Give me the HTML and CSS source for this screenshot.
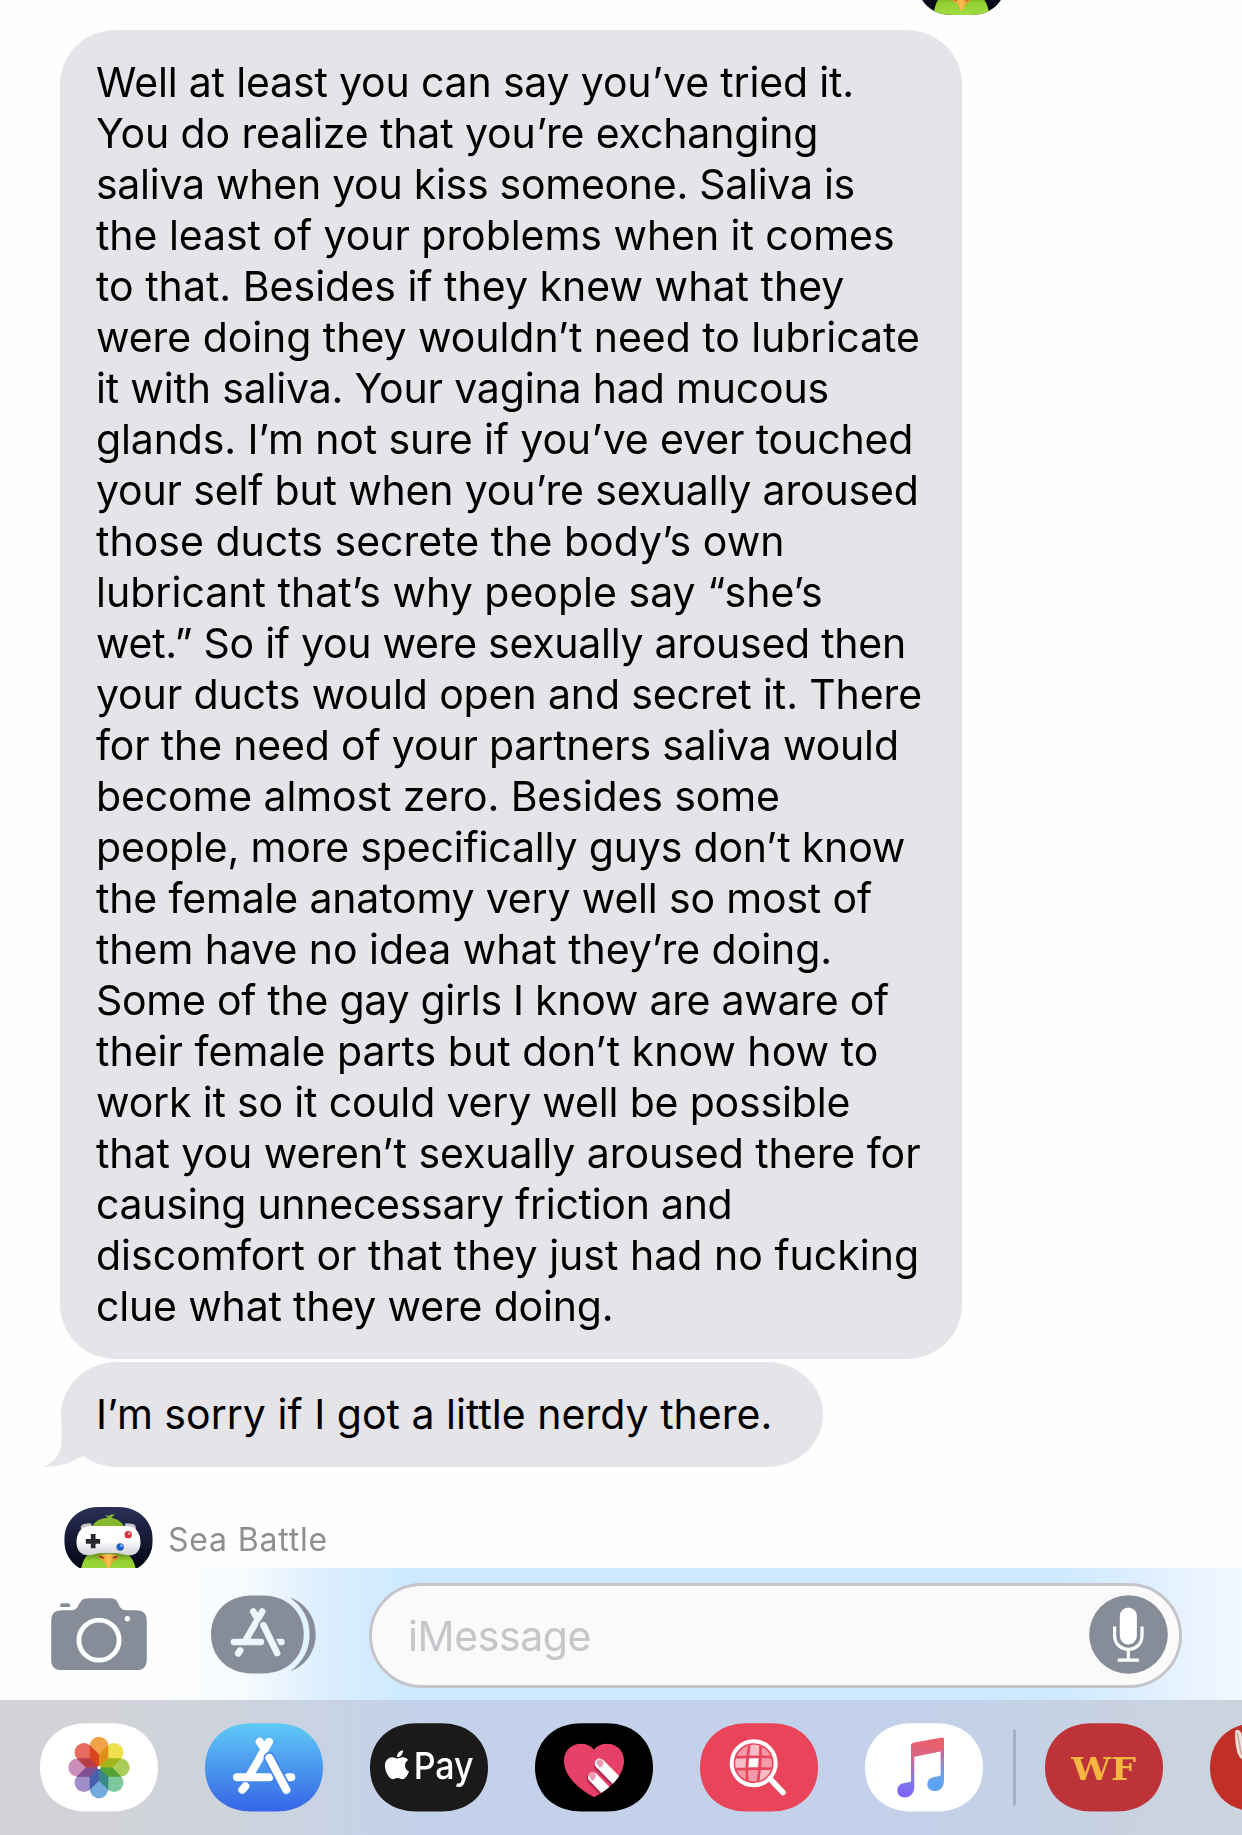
FILE: index.html
```html
<!DOCTYPE html>
<html lang="en">
<head>
<meta charset="utf-8">
<title>Messages</title>
<link rel="stylesheet" href="styles.css">
</head>
<body>
<svg class="defs" width="0" height="0" aria-hidden="true">
  <defs>
    <linearGradient id="navy" x1="0" y1="0" x2="0" y2="1"><stop offset="0" stop-color="#2a3059"/><stop offset="1" stop-color="#02030d"/></linearGradient>
    <linearGradient id="pad" x1="0" y1="0" x2="0" y2="1"><stop offset=".5" stop-color="#fff"/><stop offset="1" stop-color="#d0d0d6"/></linearGradient>
    <linearGradient id="beak"><stop offset="0" stop-color="#dc8020"/><stop offset=".5" stop-color="#ffc052"/><stop offset="1" stop-color="#c96f1c"/></linearGradient>
    <linearGradient id="feather" x1="0" y1="0" x2="0" y2="1"><stop offset="0" stop-color="#4e7d13"/><stop offset=".4" stop-color="#91cf2e"/><stop offset="1" stop-color="#a2dc44"/></linearGradient>
    <linearGradient id="store" x1="0" y1="0" x2="0" y2="1"><stop offset="0" stop-color="#60caf6"/><stop offset="1" stop-color="#3564e6"/></linearGradient>
    <linearGradient id="noteTop" gradientUnits="userSpaceOnUse" x1="170" y1="60" x2="150" y2="215"><stop offset="0" stop-color="#e8606e"/><stop offset=".3" stop-color="#d5678f"/><stop offset=".75" stop-color="#7d7de0"/><stop offset="1" stop-color="#8062fb"/></linearGradient>
    <linearGradient id="noteRight" gradientUnits="userSpaceOnUse" x1="0" y1="90" x2="0" y2="190"><stop offset="0" stop-color="#c4699f"/><stop offset=".6" stop-color="#6c9ee8"/><stop offset="1" stop-color="#5da5f4"/></linearGradient>
    <path id="pill" d="M140 0H214C300 0 354 56 354 133S300 265 214 265H140C54 265 0 210 0 133S54 0 140 0Z"/>
    <clipPath id="avatarClip"><path d="M206 50H262C326 50 367 92 367 149S326 248 262 248H206C142 248 101 206 101 149S142 50 206 50Z"/></clipPath>
    <clipPath id="heartClip"><path d="M177 222C150 208 87 168 87 112C87 62 150 46 177 80C204 46 267 62 267 112C267 168 204 208 177 222Z"/></clipPath>
    <clipPath id="lensClip"><circle cx="161" cy="120" r="55"/></clipPath>
    <path id="petal" d="M-28-64A28 28 0 0 1 28-64V-28L0 0L-28-28Z"/>
    <symbol id="bird" viewBox="101 50 266 198">
      <g clip-path="url(#avatarClip)">
        <rect x="101" y="50" width="266" height="198" fill="url(#navy)"/>
        <path d="M150 248C154 215 164 190 190 184H277C303 190 314 220 318 248Z" fill="url(#feather)"/>
        <path d="M184 110C195 88 217 83 232 83L223 73L234 77L240 73L253 72L243 82C262 86 275 96 282 110Z" fill="#86b82e"/>
        <path d="M151 108Q155 99 181 99L184 107L151 118ZM284 99Q309 99 315 106L317 118L284 108Z" fill="#c6c6cf"/>
        <path d="M180 107H288C319 107 331 133 330 158C329 184 315 196 294 195C276 194 270 189 256 189H212C196 189 191 195 174 195C151 195 139 180 138 158C137 133 149 107 180 107Z" fill="url(#pad)"/>
        <path d="M181 131H195V146H209V160H195V174H181V160H166V146H181Z" fill="#29292d"/>
        <circle cx="293" cy="133" r="11" fill="#d92f3e"/><circle cx="296" cy="130" r="4" fill="#f7a0a8"/>
        <circle cx="269" cy="170" r="11" fill="#1c5ecf"/><circle cx="273" cy="166" r="4" fill="#8abaff"/>
        <path d="M200 197Q233 185 268 197Q260 209 246 216L234 238L222 215Q207 208 200 197Z" fill="url(#beak)"/>
        <path d="M207 198L220 203M260 198L247 203" stroke="#6c3f16" stroke-width="5"/>
      </g>
    </symbol>
  </defs>
</svg>

<main class="screen">
  <section class="thread">
    <div class="previous"><svg class="avatar"><use href="#bird"/></svg></div>
    <div class="bubble">
      <span class="k3">Well at least you can say you’ve tried it.</span>
      <span class="k2">You do realize that you’re exchanging</span>
      <span class="k4">saliva when you kiss someone. Saliva is</span>
      <span class="k1">the least of your problems when it comes</span>
      <span class="k0">to that. Besides if they knew what they</span>
      <span class="k1">were doing they wouldn’t need to lubricate</span>
      <span class="k3">it with saliva. Your vagina had mucous</span>
      <span class="k2">glands. I’m not sure if you’ve ever touched</span>
      <span class="k3">your self but when you’re sexually aroused</span>
      <span class="k0">those ducts secrete the body’s own</span>
      <span class="k0">lubricant that’s why people say “she’s</span>
      <span class="k4">wet.” So if you were sexually aroused then</span>
      <span class="k2">your ducts would open and secret it. There</span>
      <span class="k3">for the need of your partners saliva would</span>
      <span class="k2">become almost zero. Besides some</span>
      <span class="k3">people, more specifically guys don’t know</span>
      <span class="k3">the female anatomy very well so most of</span>
      <span class="k1">them have no idea what they’re doing.</span>
      <span class="k4">Some of the gay girls I know are aware of</span>
      <span class="k0">their female parts but don’t know how to</span>
      <span class="k3">work it so it could very well be possible</span>
      <span class="k1">that you weren’t sexually aroused there for</span>
      <span class="k4">causing unnecessary friction and</span>
      <span class="k0">discomfort or that they just had no fucking</span>
      <span class="k3">clue what they were doing.</span>
    </div>
    <div class="bubble last">
      <span class="k0">I’m sorry if I got a little nerdy there.</span>
      <svg class="tail" viewBox="128 200 122 181"><path d="M183 200V306C181 345 158 370 128 380C172 383 218 367 246 348L250 200Z" fill="#e5e4e9"/></svg>
    </div>
    <div class="game"><svg class="avatar"><use href="#bird"/></svg><span>Sea Battle</span></div>
  </section>

  <section class="compose">
    <svg class="camera" viewBox="153 113 288 217">
      <path d="M180 140V134Q180 129 186 129H204Q210 129 210 134V140Z" fill="#868c98"/>
      <path d="M184 150H216C240 150 232 114 264 114H332C362 114 350 150 380 150H410Q441 150 441 181V298Q441 330 410 330H184Q153 330 153 298V181Q153 150 184 150Z" fill="#868c98"/>
      <circle cx="297" cy="240" r="60.5" fill="none" stroke="#fff" stroke-width="14.5"/><circle cx="382.500" cy="175.500" r="8" fill="#fff"/>
    </svg>
    <svg class="apps" viewBox="633 104 316 236">
      <path d="M755 105H790C862 105 912 155 912 222S862 339 790 339H755C683 339 633 289 633 222S683 105 755 105Z" fill="#868c98"/>
      <path d="M870 111C916 126 948 169 948 222S916 318 870 333C909 307 930 267 930 222S909 137 870 111Z" fill="#868c98"/>
      <g stroke="#edf5fe" stroke-width="20" stroke-linecap="round" fill="none">
        <path d="M787 153L736 242M760 153L768 166M702 244.500H783M832 244.500H845M721 270L715 279"/>
        <path d="M791 194L832 278" stroke="#868c98" stroke-width="32"/><path d="M791 194L832 278"/>
      </g>
    </svg>
    <div class="field"><span>iMessage</span>
      <svg class="mic" viewBox="808 104 236 236"><circle cx="926" cy="222" r="117.500" fill="#868c98"/><rect x="900" y="141" width="51" height="111" rx="25.500" fill="#fff"/><path d="M884.500 198V224C884.500 280 966.500 280 966.500 224V198M925.500 266V298M894 298.500H957" fill="none" stroke="#fff" stroke-width="9.500"/></svg>
    </div>
  </section>

  <nav class="drawer">
    <svg class="app" viewBox="0 0 354 266"><use href="#pill" fill="#fff"/>
      <g class="petals" transform="translate(177 133)">
        <use href="#petal" fill="#f1a34a"/><use href="#petal" fill="#efe14d" transform="rotate(45)"/><use href="#petal" fill="#aacd57" transform="rotate(90)"/><use href="#petal" fill="#7dc89b" transform="rotate(135)"/><use href="#petal" fill="#73acdc" transform="rotate(180)"/><use href="#petal" fill="#a18dc8" transform="rotate(225)"/><use href="#petal" fill="#cb8dba" transform="rotate(270)"/><use href="#petal" fill="#e66c60" transform="rotate(315)"/>
      </g><circle cx="177" cy="133" r="5" fill="#fff"/></svg>
    <svg class="app" viewBox="0 0 354 266"><use href="#pill" fill="url(#store)"/>
      <g stroke="#fff" stroke-width="24" stroke-linecap="round" fill="none"><path d="M192 56L135 155M164 56L174 71M96 162H193M250 162H259M121 189L112 200"/><path d="M193 104L244 200" stroke="#4785ec" stroke-width="35"/><path d="M193 104L244 200"/></g></svg>
    <svg class="app" viewBox="0 0 354 266"><use href="#pill" fill="#1b1a18"/>
      <path transform="translate(44 75) scale(.192 .194)" fill="#fff" d="M318.700 268.700c-.2-36.700 16.400-64.400 50-84.800-18.800-26.900-47.200-41.700-84.700-44.600-35.500-2.800-74.300 20.700-88.500 20.700-15 0-49.400-19.700-76.400-19.700C63.300 141.200 4 184.800 4 273.500q0 39.300 14.400 81.200c12.800 36.700 59 126.700 107.200 125.200 25.200-.6 43-17.900 75.800-17.900 31.800 0 48.300 17.900 76.400 17.900 48.600-.7 90.400-82.500 102.600-119.300-65.200-30.700-61.700-90-61.700-91.900zm-56.600-164.200c27.300-32.400 24.800-61.900 24-72.500-24.100 1.400-52 16.400-67.900 34.900-17.500 19.800-27.800 44.300-25.600 71.900 26.100 2 49.900-11.400 69.500-34.300z"/>
      <text class="pay" x="131" y="168" textLength="180" lengthAdjust="spacingAndGlyphs">Pay</text></svg>
    <svg class="app" viewBox="0 0 354 266"><use href="#pill" fill="#000"/>
      <g clip-path="url(#heartClip)"><rect x="80" y="55" width="200" height="170" fill="#e84169"/>
        <g stroke-linecap="round"><path d="M172 166L232 229M195 128L266 199" stroke="#b02950" stroke-width="36"/><path d="M174 162L240 231M194 121L280 208" stroke="#fff" stroke-width="30"/></g>
        <path d="M161 158Q160 147 175 146Q185 152 182 162L176 171H169ZM184 119Q184 108 198 108Q208 115 205 124L199 132H192Z" fill="#ed9bb3"/></g></svg>
    <svg class="app" viewBox="0 0 354 266"><use href="#pill" fill="#e9445a"/>
      <g clip-path="url(#lensClip)"><rect x="100" y="60" width="120" height="120" fill="#f39aaa"/><path d="M143 60L179 62L175 105H139ZM101 106H139L136 136H101ZM179 139H220V180H175Z" fill="#f7bdc7"/><path d="M147 106H175L172 134H144Z" fill="#fff"/>
        <path d="M100 103Q160 99 221 102M100 138Q160 135 221 137M149 60Q137 119 142 181M181 60Q184 119 173 181" fill="none" stroke="#e9445a" stroke-width="8"/></g>
      <circle cx="161" cy="120" r="66" fill="none" stroke="#fff" stroke-width="12"/><path d="M213 170L249 208" stroke="#fff" stroke-width="17" stroke-linecap="round"/><path d="M205 162L216 173" stroke="#fff" stroke-width="9"/></svg>
    <svg class="app" viewBox="0 0 354 266"><use href="#pill" fill="#fff"/>
      <path d="M138 67Q138 61 144 59L231 43Q237 42 237 48V96L227 85L148 101V190C148 233 97 230 97 203C97 173 132 181 138 174Z" fill="url(#noteTop)"/>
      <path d="M227 85L237 80V171C237 215 187 210 187 184C187 156 220 163 227 156Z" fill="url(#noteRight)"/></svg>
    <i class="divider"></i>
    <svg class="app" viewBox="0 0 354 266"><use href="#pill" fill="#be3337"/><text class="wf" x="79" y="171" textLength="194" lengthAdjust="spacingAndGlyphs">WF</text></svg>
    <svg class="app" viewBox="0 0 354 266"><use href="#pill" fill="#c13027"/><path d="M76 23Q84 15 94 28L109 112Q90 112 82 88Q73 55 76 23Z" fill="#eee0dc"/><path d="M82 28L94 94" stroke="#cda69d" stroke-width="5"/></svg>
  </nav>
</main>
</body>
</html>
```
FILE: styles.css
```css
* { box-sizing: border-box; }
body { margin: 0; background: #fefefe; font-family: Inter, "Liberation Sans", sans-serif; }
.defs { position: absolute; }
.screen { display: flex; flex-direction: column; width: 1242px; height: 1835px; overflow: hidden; }
.thread { display: flex; flex-direction: column; align-items: flex-start; height: 1568px; overflow: hidden; }
.thread > * { flex: none; }
.previous { display: flex; align-items: flex-end; width: 100%; height: 15px; margin-bottom: 15px; padding-left: 917px; overflow: hidden; }
.avatar { display: block; flex: none; width: 89px; height: 66px; }
.bubble { width: 902px; height: 1329px; margin-left: 60px; padding: 27px 36px; background: #e5e4e9; border-radius: 56px / 54px; color: #000; font-size: 41px; line-height: 51px; }
.bubble span { display: block; white-space: nowrap; }
.k0 { letter-spacing: 0.02px; }
.k1 { letter-spacing: -0.05px; }
.k2 { letter-spacing: -0.12px; }
.k3 { letter-spacing: -0.17px; }
.k4 { letter-spacing: -0.27px; }
.bubble.last { position: relative; width: 762px; height: 105px; margin: 3px 0 0 61px; padding-left: 35px; border-radius: 56px / 52.5px; }
.tail { position: absolute; left: -18px; bottom: 0; width: 41px; height: 60px; }
.game { display: flex; align-items: flex-start; gap: 15px; margin: 40px 0 0 64px; }
.game span { color: #8e8e93; font-size: 32px; line-height: 66px; letter-spacing: 0.8px; }
.compose { display: flex; flex: none; align-items: flex-start; height: 132px; padding: 15px 60px 0 51px; background: linear-gradient(90deg, #fefefe 13%, #f5faff 20%, #dceeff 26%, #cde9ff 33%, #cde9ff 85%, #dfefff 92%, #f2f8ff 100%); }
.camera { width: 96px; height: 72px; margin-top: 15px; }
.apps { width: 105px; height: 79px; margin: 12px 0 0 64px; }
.field { display: flex; align-items: center; justify-content: space-between; width: 813px; height: 105px; margin-left: 53px; padding: 0 11px 0 36px; border: 3px solid #c4c4ca; border-radius: 53px; background: #fafafa; color: #c5c5ca; font-size: 41px; letter-spacing: -0.4px; }
.mic { width: 79px; height: 79px; margin-bottom: 3px; }
.drawer { display: flex; flex: none; align-items: flex-start; gap: 47px; height: 135px; padding: 22.5px 0 0 40px; background: linear-gradient(90deg, #d2d3d8 5%, #cfd3da 16%, #c3d2ea 34%, #c3d2ea 75%, #c8d2e1 90%, #ccd3de 100%); }
.app { flex: none; width: 118px; height: 89px; overflow: visible; }
.petals { isolation: isolate; }
.petals use { mix-blend-mode: multiply; }
.divider { flex: none; width: 3px; height: 77px; margin: 6px -17.5px; border-radius: 2px; background: #a3b1ca; }
.pay { fill: #fff; font: 500 112px Inter, sans-serif; }
.wf { fill: #f5b642; font: bold 96px "DejaVu Serif", serif; }
```
